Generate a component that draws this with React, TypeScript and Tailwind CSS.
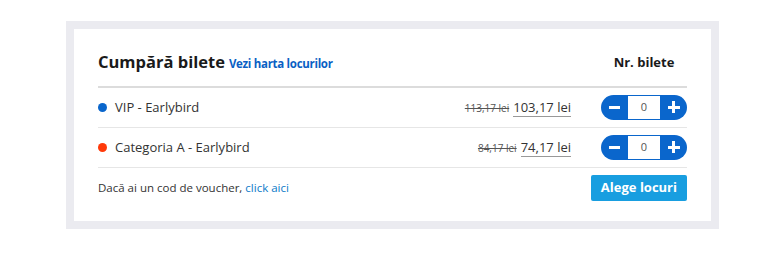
type TicketType = {
  name: string;
  color: string;
  oldPrice: string;
  price: string;
};

const tickets: TicketType[] = [
  { name: 'VIP - Earlybird', color: 'bg-[#0a66cc]', oldPrice: '113,17 lei', price: '103,17 lei' },
  { name: 'Categoria A - Earlybird', color: 'bg-[#ff3a0a]', oldPrice: '84,17 lei', price: '74,17 lei' },
];

function Stepper() {
  return (
    <div className="flex h-[25px] w-[86px]">
      <button className="flex w-[27px] items-center justify-center rounded-l-full bg-[#0a66cc]">
        <span className="block h-[3px] w-[11px] bg-white" />
      </button>
      <div className="flex flex-1 items-center justify-center border-y border-[#0a66cc] bg-white text-[11px] text-[#555]">
        0
      </div>
      <button className="relative flex w-[27px] items-center justify-center rounded-r-full bg-[#0a66cc]">
        <span className="block h-[3px] w-[12px] bg-white" />
        <span className="absolute block h-[12px] w-[3px] bg-white" />
      </button>
    </div>
  );
}

export default function App() {
  return (
    <div className="min-h-[259px] bg-white pt-[21px] font-['Open_Sans',sans-serif]">
      <div className="ml-[66px] w-[653px] border-8 border-[#ebebf0] bg-white px-[24px] pb-[20px] pt-[20px]">
        <div className="flex items-center justify-between border-b-2 border-[#dcdcdc] pb-[11px] pt-[1px]">
          <div className="flex items-baseline gap-[4px]">
            <h2 className="text-[16.5px] font-bold text-[#1a1a1a]">Cumpără bilete</h2>
            <a className="text-[11.5px] font-bold tracking-[-0.3px] text-[#0a5fc4]">Vezi harta locurilor</a>
          </div>
          <div className="w-[86px] text-center text-[13px] font-bold text-[#1a1a1a]">Nr. bilete</div>
        </div>

        {tickets.map((t, i) => (
          <div key={i} className="flex h-[40px] items-center justify-between border-b border-[#e6e6e6]">
            <div className="flex items-center gap-[8px]">
              <span className={`block h-[9px] w-[9px] rounded-full ${t.color}`} />
              <span className="text-[13px] text-[#333]">{t.name}</span>
            </div>
            <div className="flex items-center gap-[30px]">
              <div className="flex items-baseline gap-[4px]">
                <span className="text-[10px] text-[#555] line-through">{t.oldPrice}</span>
                <span className="border-b border-[#999] text-[13px] leading-[18px] text-[#333]">{t.price}</span>
              </div>
              <Stepper />
            </div>
          </div>
        ))}

        <div className="flex items-center justify-between pt-[7px]">
          <p className="text-[11.5px] text-[#333]">
            Dacă ai un cod de voucher, <a className="text-[#0a7ac8]">click aici</a>
          </p>
          <button className="h-[26px] rounded-[2px] bg-[#189ee0] px-[10px] text-[13px] font-bold text-white">
            Alege locuri
          </button>
        </div>
      </div>
    </div>
  );
}
